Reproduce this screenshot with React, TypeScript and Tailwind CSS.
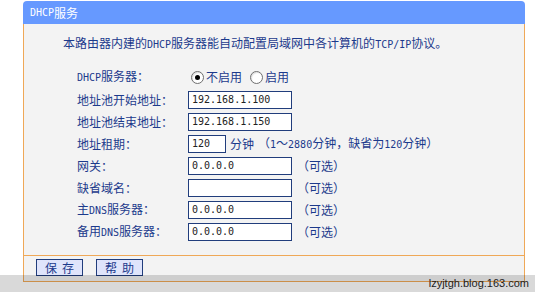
import React from "react";

const A = ({ children }: { children: React.ReactNode }) => (
  <span className="font-['DejaVu_Sans_Mono'] text-[10px]">{children}</span>
);

const Input = ({ value, w = "w-[104px]" }: { value: string; w?: string }) => (
  <div
    className={`${w} h-[18px] border border-[#213d7c] bg-white px-[3px] flex items-center text-[#222]`}
  >
    <A>{value}</A>
  </div>
);

const Row = ({ label, children }: { label: React.ReactNode; children: React.ReactNode }) => (
  <div className="flex items-center h-[22px]">
    <div className="w-[111px] shrink-0">{label}</div>
    <div className="flex items-center">{children}</div>
  </div>
);

const Optional = () => <span className="ml-[5px]">（可选）</span>;

const Radio = ({ checked }: { checked?: boolean }) => (
  <span className="w-[13px] h-[13px] rounded-full border border-[#6f6f6f] bg-white flex items-center justify-center shrink-0 shadow-[inset_1px_1px_1px_rgba(0,0,0,0.12)]">
    {checked && <span className="w-[5px] h-[5px] rounded-full bg-black" />}
  </span>
);

const Button = ({ a, b }: { a: string; b: string }) => (
  <div className="w-[47px] h-[17px] border border-[#213d7c] bg-[#dfe4fb] flex items-center justify-center gap-[5px] text-[#1c3a8c] text-[12px] leading-none">
    <span>{a}</span>
    <span>{b}</span>
  </div>
);

export default function App() {
  return (
    <div className="relative w-[535px] h-[292px] bg-white overflow-hidden font-['Noto_Sans_CJK_SC'] text-[12px] leading-[16px]">
      <div className="ml-[23px] mt-[1px] w-[502px] flex flex-col">
        <div className="h-[23px] bg-[#6699ff] rounded-t-[4px] text-white flex items-center pl-[7px]">
          <A>DHCP</A>服务
        </div>
        <div className="border-x border-[#efa857] bg-[#f3f3f3] text-[#1c3a8c]">
          <div className="pl-[39px] pt-[11px] h-[27px]">
            本路由器内建的<A>DHCP</A>服务器能自动配置局域网中各计算机的<A>TCP/IP</A>协议。
          </div>
          <div className="pl-[53px] pt-[14px] pb-[12px] flex flex-col">
            <div className="flex items-center h-[24px]">
              <div className="w-[111px] shrink-0">
                <A>DHCP</A>服务器：
              </div>
              <div className="flex items-center pl-[3px]">
                <Radio checked />
                <span className="ml-[2px]">不启用</span>
                <span className="ml-[8px]" />
                <Radio />
                <span className="ml-[2px]">启用</span>
              </div>
            </div>
            <Row label="地址池开始地址：">
              <Input value="192.168.1.100" />
            </Row>
            <Row label="地址池结束地址：">
              <Input value="192.168.1.150" />
            </Row>
            <Row label="地址租期：">
              <Input value="120" w="w-[38px]" />
              <span className="ml-[4px]">分钟</span>
              <span className="ml-[4px]">
                （<A>1</A>～<A>2880</A>分钟，缺省为<A>120</A>分钟）
              </span>
            </Row>
            <Row label="网关：">
              <Input value="0.0.0.0" />
              <Optional />
            </Row>
            <Row label="缺省域名：">
              <Input value="" />
              <Optional />
            </Row>
            <Row label={<><span>主</span><A>DNS</A>服务器：</>}>
              <Input value="0.0.0.0" />
              <Optional />
            </Row>
            <Row label={<><span>备用</span><A>DNS</A>服务器：</>}>
              <Input value="0.0.0.0" />
              <Optional />
            </Row>
          </div>
        </div>
        <div className="border border-[#efa857] bg-[#f3f3f3] h-[27px] pl-[12px] pt-[3px] flex gap-[13px] items-start">
          <Button a="保" b="存" />
          <Button a="帮" b="助" />
        </div>
      </div>
      <div className="absolute left-0 right-0 bottom-0 h-[17px] bg-black/15 flex items-center justify-end pr-[6px]">
        <span className="font-['Liberation_Sans'] text-[11px] text-[#222] leading-none">
          lzyjtgh.blog.163.com
        </span>
      </div>
    </div>
  );
}
